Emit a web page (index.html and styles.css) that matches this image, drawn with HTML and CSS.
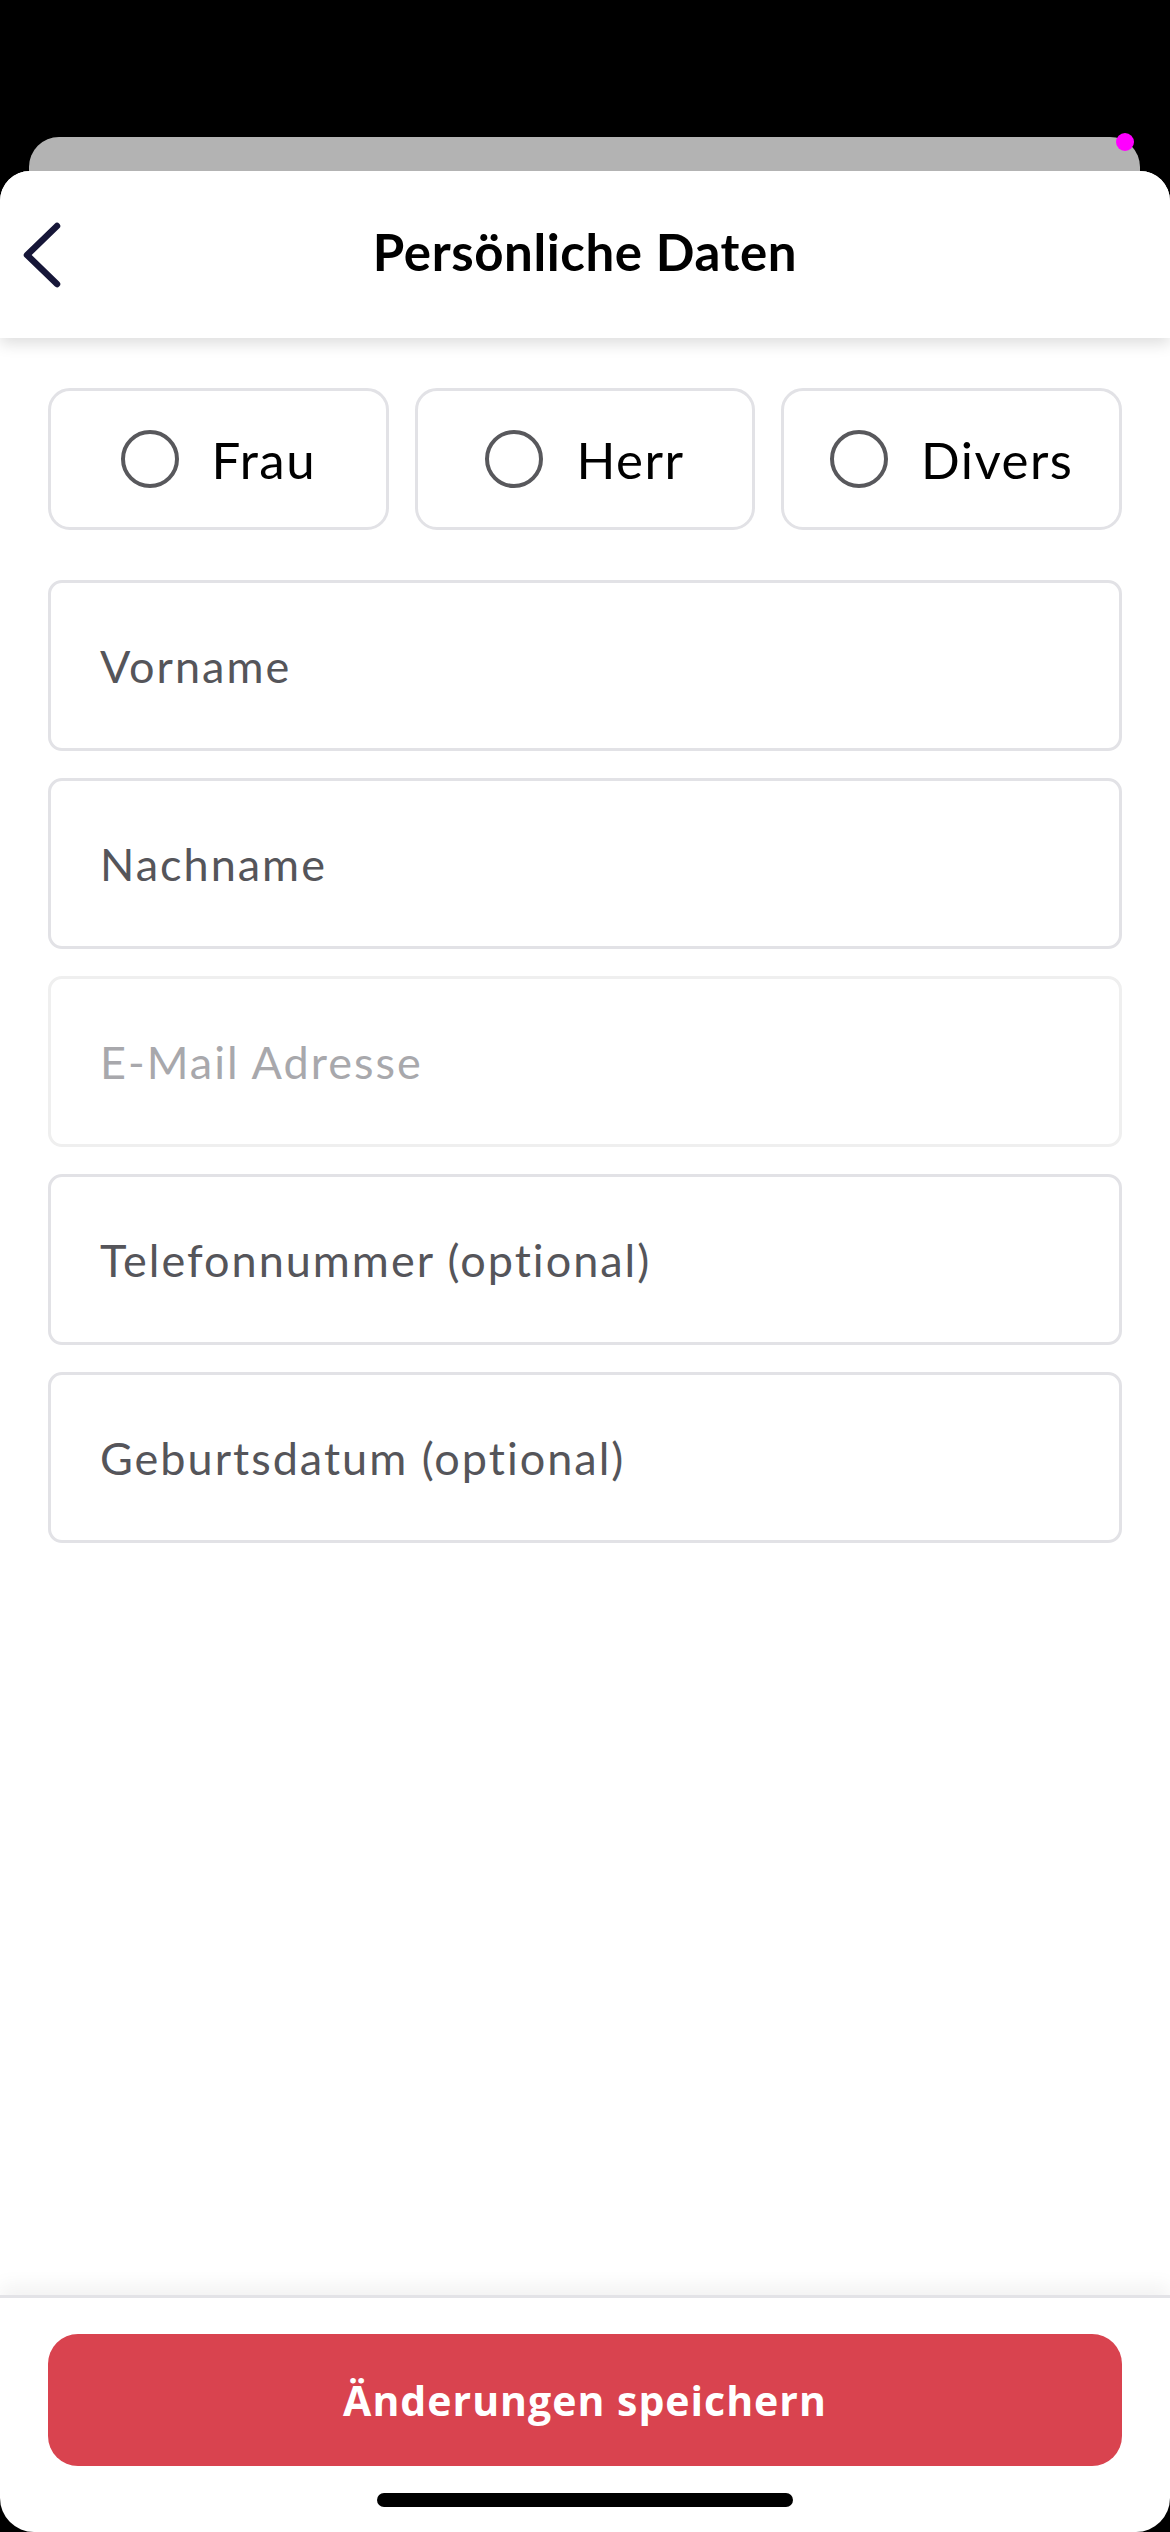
FILE: index.html
```html
<!DOCTYPE html>
<html lang="de">
<head>
<meta charset="utf-8">
<title>Persönliche Daten</title>
<link rel="stylesheet" href="styles.css">
</head>
<body>
<div class="backcard"><span class="dot"></span></div>
<div class="sheet">
  <header class="header">
    <button class="back" aria-label="Zurück">
      <svg width="40" height="66" viewBox="0 0 40 66"><path d="M35 4 L5 33 L35 62" fill="none" stroke="#161638" stroke-width="6.5" stroke-linecap="round" stroke-linejoin="round"/></svg>
    </button>
    <h1 class="title">Persönliche Daten</h1>
  </header>
  <main class="content">
    <div class="genders">
      <label class="gender"><span class="radio"></span><span class="glabel">Frau</span></label>
      <label class="gender"><span class="radio"></span><span class="glabel">Herr</span></label>
      <label class="gender"><span class="radio"></span><span class="glabel">Divers</span></label>
    </div>
    <div class="fields">
      <div class="field">Vorname</div>
      <div class="field">Nachname</div>
      <div class="field disabled">E-Mail Adresse</div>
      <div class="field">Telefonnummer (optional)</div>
      <div class="field">Geburtsdatum (optional)</div>
    </div>
  </main>
  <footer class="footer">
    <button class="save">Änderungen speichern</button>
    <div class="home"></div>
  </footer>
</div>
</body>
</html>
```
FILE: styles.css
```css
html, body {
  margin: 0;
  padding: 0;
  background: #000;
}
body {
  width: 1170px;
  height: 2532px;
  overflow: hidden;
  font-family: "Lato", "Noto Sans", sans-serif;
}
.backcard {
  position: relative;
  margin: 137px 30px 0 29px;
  height: 34px;
  background: #b3b3b3;
  border-radius: 30px 30px 0 0;
}
.dot {
  position: absolute;
  right: 6px;
  top: -4px;
  width: 18px;
  height: 18px;
  border-radius: 50%;
  background: #ff00ff;
}
.sheet {
  height: 2361px;
  background: #fff;
  border-radius: 30px 30px 34px 34px;
  display: flex;
  flex-direction: column;
  overflow: hidden;
}
.header {
  position: relative;
  z-index: 2;
  height: 167px;
  box-sizing: border-box;
  padding-bottom: 6px;
  flex: none;
  display: flex;
  align-items: center;
  justify-content: center;
  background: #fff;
  box-shadow: 0 6px 14px rgba(0, 0, 0, 0.13);
}
.back {
  position: absolute;
  left: 22px;
  top: 51px;
  padding: 0;
  border: 0;
  background: none;
  width: 40px;
  height: 66px;
}
.back svg { display: block; }
.title {
  margin: 0;
  font-size: 51px;
  font-weight: 700;
  color: #000;
  letter-spacing: 0.6px;
}
.content {
  flex: 1;
  padding: 50px 48px 0;
  display: flex;
  flex-direction: column;
  gap: 50px;
}
.genders {
  display: grid;
  grid-template-columns: repeat(3, 1fr);
  gap: 26px;
}
.gender {
  height: 142px;
  box-sizing: border-box;
  border: 3px solid #e2e2e6;
  border-radius: 22px;
  display: flex;
  align-items: center;
  justify-content: center;
  gap: 33px;
}
.radio {
  width: 58px;
  height: 58px;
  box-sizing: border-box;
  border: 4px solid #58585c;
  border-radius: 50%;
  flex: none;
}
.glabel {
  font-size: 51px;
  letter-spacing: 1.5px;
  color: #000;
}
.fields {
  display: flex;
  flex-direction: column;
  gap: 27px;
}
.field {
  height: 171px;
  box-sizing: border-box;
  border: 3px solid #e2e2e6;
  border-radius: 14px;
  padding: 0 0 0 49px;
  display: flex;
  align-items: center;
  font-size: 45px;
  letter-spacing: 2px;
  color: #55555a;
}
.field.disabled {
  border-color: #efefef;
  color: #a8a8ac;
}
.footer {
  flex: none;
  position: relative;
  border-top: 3px solid #e3e3e7;
  box-shadow: 0 -10px 18px rgba(0, 0, 0, 0.05);
  padding: 36px 48px 25px;
  display: flex;
  flex-direction: column;
  align-items: center;
  gap: 27px;
}
.save {
  width: 100%;
  height: 132px;
  border: 0;
  border-radius: 30px;
  background: #d9434f;
  color: #fff;
  font-family: "Open Sans", "Liberation Sans", sans-serif;
  font-weight: 700;
  font-size: 41px;
  letter-spacing: 1px;
}
.home {
  width: 416px;
  height: 14px;
  border-radius: 7px;
  background: #000;
}
```
